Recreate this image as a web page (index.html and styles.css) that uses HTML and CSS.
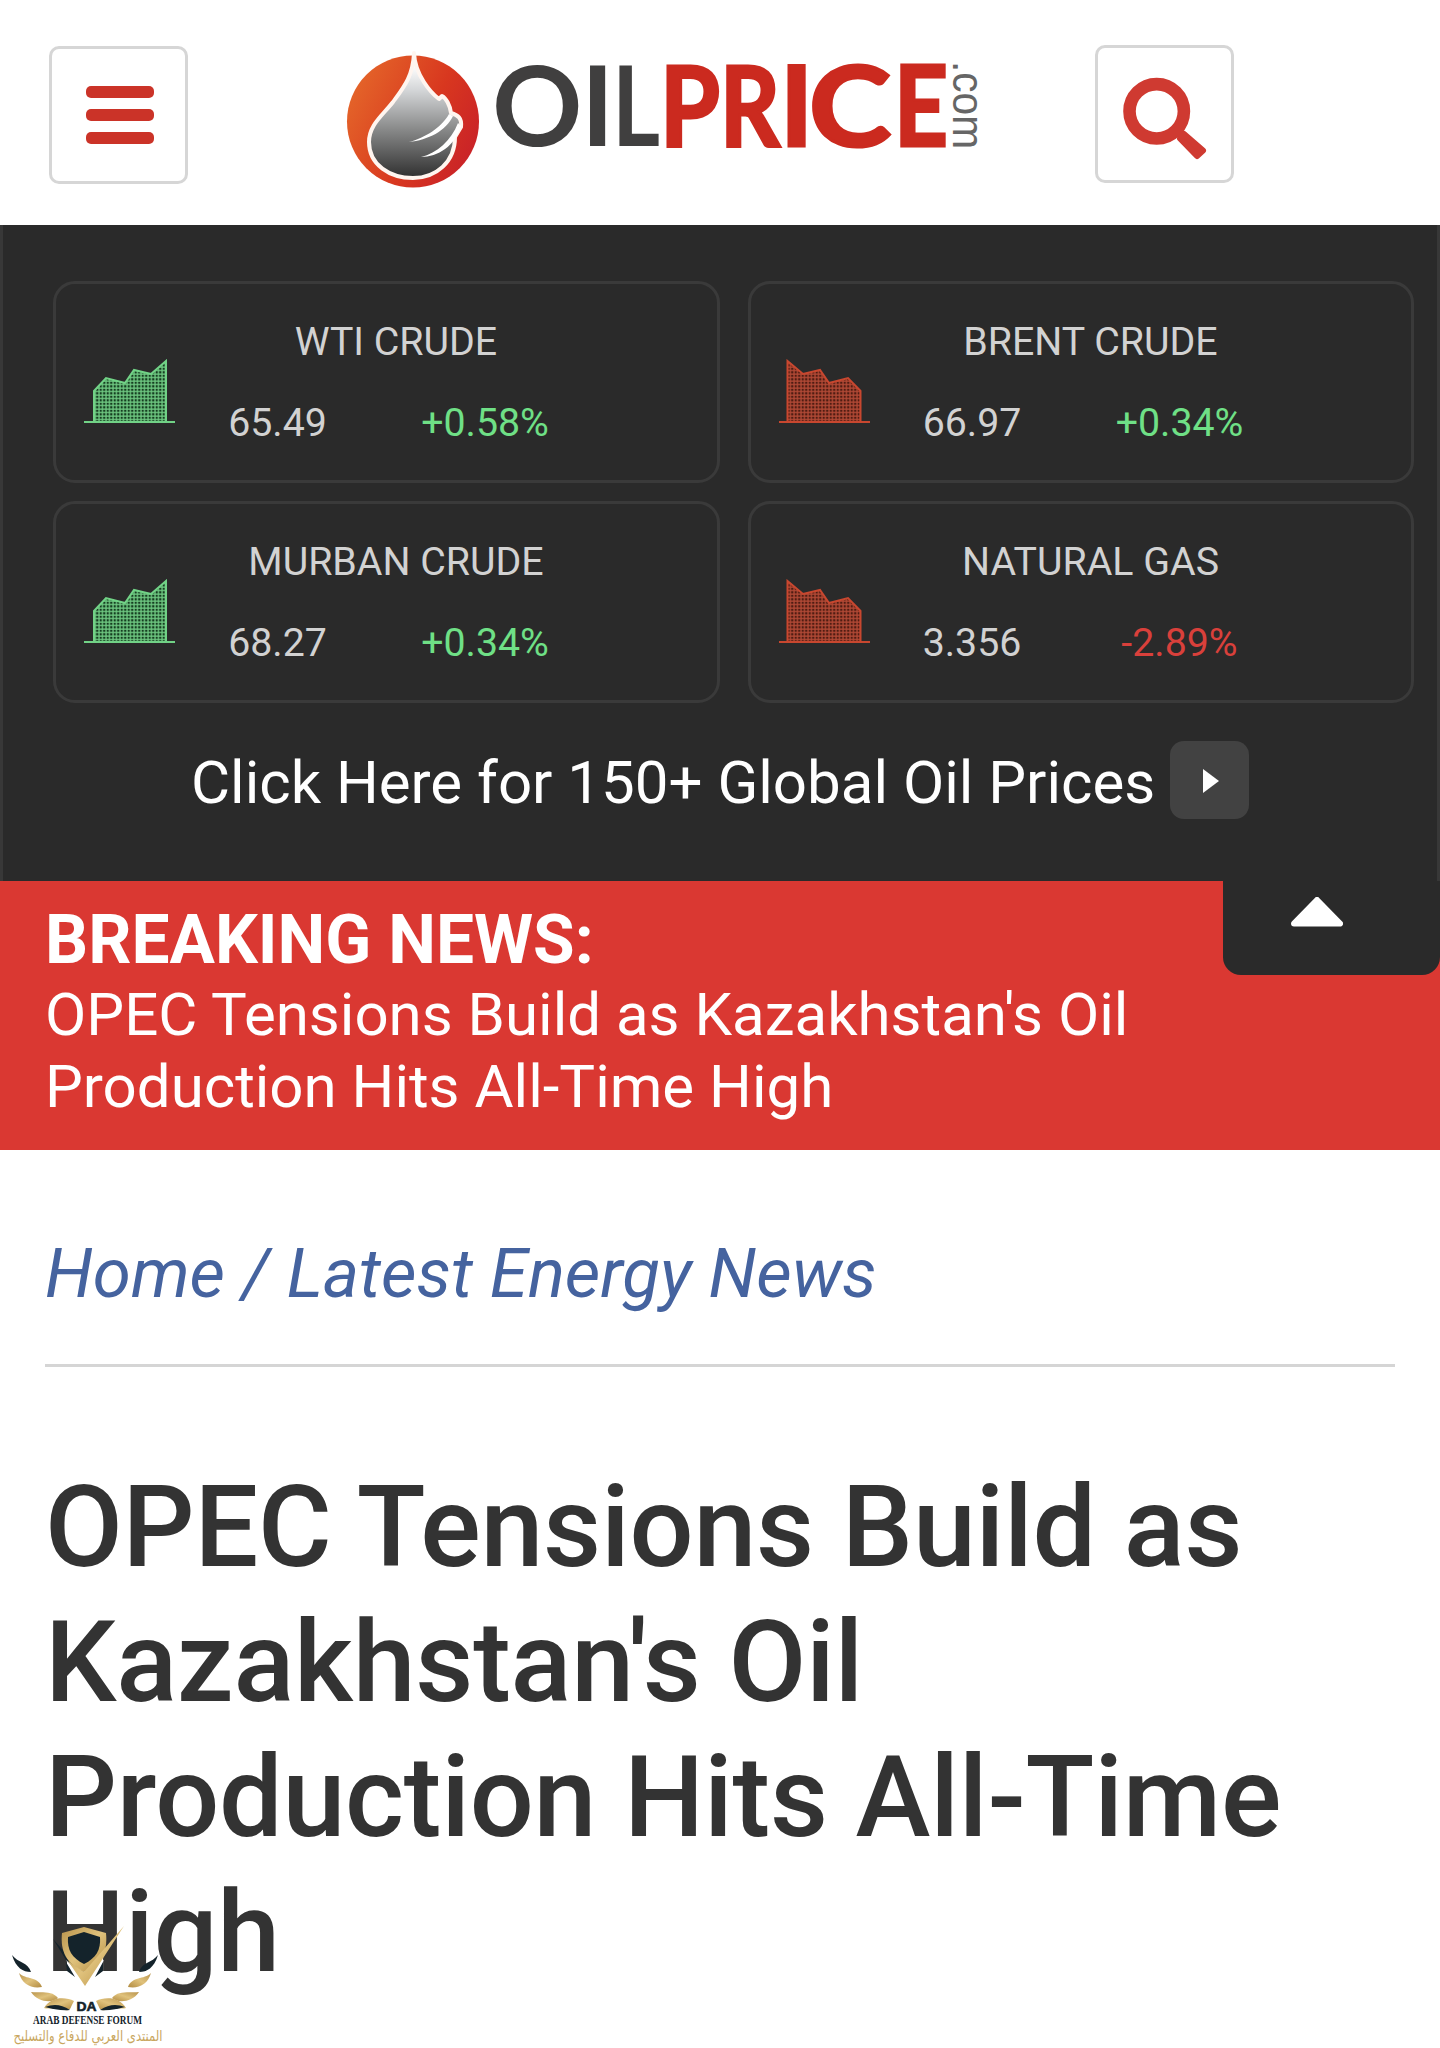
FILE: index.html
```html
<!DOCTYPE html>
<html lang="en">

<head>
    <meta charset="UTF-8">
    <meta name="viewport" content="width=device-width, initial-scale=1.0">
    <title>OPEC Tensions Build as Kazakhstan's Oil Production Hits All-Time High | OilPrice.com</title>
    <link rel="stylesheet" href="styles.css">
</head>

<body>

    <!-- chart icons shared by the price cards -->
    <svg class="sprite" aria-hidden="true">
        <defs>
            <pattern id="grid-up" width="3.5" height="3.5" patternUnits="userSpaceOnUse">
                <rect width="3.5" height="3.5" fill="#153d20" />
                <path d="M0 1H3.5M1 0V3.5" stroke="#6fc982" stroke-width="1.3" />
            </pattern>
            <pattern id="grid-down" width="3.5" height="3.5" patternUnits="userSpaceOnUse">
                <rect width="3.5" height="3.5" fill="#501c12" />
                <path d="M0 1H3.5M1 0V3.5" stroke="#b34a36" stroke-width="1.3" />
            </pattern>
        </defs>
        <symbol id="chart-up" viewBox="0 0 92 66">
            <path d="M10 63V32L22 19L41 24L50 11L67 15L82 2V63" fill="url(#grid-up)" stroke="#71d286" stroke-width="2" />
            <path d="M0 63H91" stroke="#71d286" stroke-width="2.2" />
        </symbol>
        <symbol id="chart-down" viewBox="0 0 92 66">
            <path d="M8.500 63V2L24 15L41 11L50 24L69 19L81.500 32V63" fill="url(#grid-down)" stroke="#c8472f" stroke-width="2" />
            <path d="M0 63H91" stroke="#c8472f" stroke-width="2.2" />
        </symbol>
    </svg>

    <header class="header">
        <button class="icon-btn menu-btn" aria-label="Menu">
            <span></span>
            <span></span>
            <span></span>
        </button>
        <a class="logo" href="#" aria-label="OilPrice.com">
            <svg width="640" height="140" viewBox="345 50 640 140">
                <defs>
                    <linearGradient id="ball" x1="0" y1="0.2" x2="1" y2="0.7">
                        <stop offset="0" stop-color="#e5682a" />
                        <stop offset="0.6" stop-color="#d8371f" />
                        <stop offset="1" stop-color="#c92228" />
                    </linearGradient>
                    <linearGradient id="drop" x1="0" y1="0" x2="0" y2="1">
                        <stop offset="0.1" stop-color="#ffffff" />
                        <stop offset="0.3" stop-color="#d3d5d7" />
                        <stop offset="0.6" stop-color="#8b8c8c" />
                        <stop offset="1" stop-color="#2f2f2f" />
                    </linearGradient>
                </defs>
                <circle cx="413" cy="121.500" r="66" fill="url(#ball)" />
                <path d="M414 54C413 77 404 88 393 103C382 117 369 126 369 143C369 166 390 179 413 179C436 179 455 163 455 138L461 128C462 119 458 116 451 114C450 106 446 99 442 97L439 100C431 94 415 76 414 54Z" transform="translate(0 -1)" fill="url(#drop)" stroke="#fff5ef" stroke-width="4" stroke-linejoin="round" />
                <path d="M409 142C425 138 442 127 449 114L453 116C446 131 428 140 409 142ZM421 157C437 153 451 141 458 123L461 126C455 146 438 157 421 157Z" fill="#fff" />
                <text class="logo-oil" y="146"><tspan x="492 581">OI</tspan><tspan x="612" textLength="48" lengthAdjust="spacingAndGlyphs">L</tspan></text>
                <text class="logo-price" y="146"><tspan x="660" textLength="60" lengthAdjust="spacingAndGlyphs">P</tspan><tspan x="720" textLength="60" lengthAdjust="spacingAndGlyphs">R</tspan><tspan x="780">I</tspan><tspan x="809" textLength="82" lengthAdjust="spacingAndGlyphs">C</tspan><tspan x="894" textLength="54" lengthAdjust="spacingAndGlyphs">E</tspan></text>
                <text class="logo-com" transform="translate(953 61) rotate(90)" textLength="88" lengthAdjust="spacingAndGlyphs">.com</text>
            </svg>
        </a>
        <button class="icon-btn search-btn" aria-label="Search">
            <svg width="92" height="96" viewBox="0 0 92 96">
                <circle cx="37.700" cy="45.300" r="27.200" fill="none" stroke="#cf3a31" stroke-width="12.600" />
                <path d="M65 68L61 72.500L78 90L84 84.500Z" fill="#cf3a31" stroke="#cf3a31" stroke-width="6" stroke-linejoin="round" />
            </svg>
        </button>
    </header>

    <section class="prices">
        <div class="price-grid">
            <div class="price-card">
                <svg class="chart"><use href="#chart-up" /></svg>
                <div class="price-name">WTI CRUDE</div>
                <div class="price-value">65.49</div>
                <div class="price-change up">+0.58%</div>
            </div>
            <div class="price-card">
                <svg class="chart"><use href="#chart-down" /></svg>
                <div class="price-name">BRENT CRUDE</div>
                <div class="price-value">66.97</div>
                <div class="price-change up">+0.34%</div>
            </div>
            <div class="price-card">
                <svg class="chart"><use href="#chart-up" /></svg>
                <div class="price-name">MURBAN CRUDE</div>
                <div class="price-value">68.27</div>
                <div class="price-change up">+0.34%</div>
            </div>
            <div class="price-card">
                <svg class="chart"><use href="#chart-down" /></svg>
                <div class="price-name">NATURAL GAS</div>
                <div class="price-value">3.356</div>
                <div class="price-change down">-2.89%</div>
            </div>
        </div>
        <a class="all-prices" href="#">
            <span>Click Here for 150+ Global Oil Prices</span>
            <i class="play"><svg width="16" height="24" viewBox="0 0 16 24"><path d="M0 0L16 12L0 24Z" fill="#fff" /></svg></i>
        </a>
    </section>

    <section class="breaking">
        <button class="toggle" aria-label="Hide prices">
            <svg width="52" height="30" viewBox="0 0 52 30"><path d="M26 3L49 26.500H3Z" fill="#fff" stroke="#fff" stroke-width="6" stroke-linejoin="round" /></svg>
        </button>
        <strong>BREAKING NEWS:</strong>
        <a href="#">OPEC Tensions Build as Kazakhstan's Oil<br>Production Hits All-Time High</a>
    </section>

    <main class="article">
        <nav class="breadcrumb"><a href="#">Home</a> / <a href="#">Latest Energy News</a></nav>
        <h1>OPEC Tensions Build as<br>Kazakhstan's Oil<br>Production Hits All-Time<br>High</h1>
    </main>

    <!-- forum badge -->
    <div class="badge">
        <svg width="170" height="138" viewBox="0 0 170 138">
            <defs>
                <linearGradient id="gold" x1="0" y1="0" x2="1" y2="1">
                    <stop offset="0" stop-color="#b8934c" />
                    <stop offset="0.5" stop-color="#e0c27c" />
                    <stop offset="1" stop-color="#b18a40" />
                </linearGradient>
                <g id="wing">
                    <path d="M12 45C18 53 28 52 31 62C23 62 16 58 12 45Z" fill="#14232b" />
                    <path d="M19 63C26 70 38 66 42 77C31 79 22 74 19 63Z" fill="url(#gold)" />
                    <path d="M31 82C40 83 52 80 58 88C53 93 38 93 31 82Z" fill="url(#gold)" />
                    <path d="M44 98C51 86 66 87 74 91C70 98 71 101 65 100C58 95 51 100 44 98Z" fill="url(#gold)" />
                    <path d="M45 97C53 94 61 94 70 100C62 101 53 99 45 97Z" fill="#14232b" />
                </g>
            </defs>
            <use href="#wing" />
            <use href="#wing" transform="translate(170 0) scale(-1 1)" />
            <path d="M66 50L76 67L85 77L95 67L104 50L85 60Z" fill="#fff" />
            <path d="M53 29L69 47L84 62L78 61L66 50ZM66 52L75 67L67 61ZM103 52L95 67L103 61Z" fill="#14232b" />
            <path d="M62 23L84 17L106 23C108 42 101 54 84 62C67 54 60 42 62 23Z" fill="url(#gold)" />
            <path d="M68 27L84 22L100 27C101 40 96 48 84 54C72 48 67 40 68 27Z" fill="#14232b" />
            <path d="M68 51L84 62L124 16L85 76Z" fill="url(#gold)" />
            <text class="badge-da" x="86.500" y="101" textLength="20" lengthAdjust="spacingAndGlyphs">DA</text>
            <text class="badge-name" x="33" y="114" textLength="109" lengthAdjust="spacingAndGlyphs">ARAB DEFENSE FORUM</text>
            <text class="badge-arabic" x="88" y="131" textLength="149" lengthAdjust="spacingAndGlyphs">المنتدى العربي للدفاع والتسليح</text>
        </svg>
    </div>

</body>

</html>
```
FILE: styles.css
```css
* {
    box-sizing: border-box;
}

body {
    margin: 0;
    height: 2048px;
    overflow: hidden;
    position: relative;
    font-family: Roboto, Arial, sans-serif;
    background-color: #fff;
    color: #333;
}

a {
    color: inherit;
    text-decoration: none;
}

button {
    padding: 0;
    border: none;
    cursor: pointer;
}

.sprite {
    display: block;
    width: 0;
    height: 0;
}

/* header */
.header {
    display: flex;
    align-items: flex-start;
    height: 225px;
    padding: 45px 0 0 49px;
}

.icon-btn {
    display: flex;
    align-items: center;
    justify-content: center;
    width: 139px;
    height: 138px;
    background-color: #fff;
    border: 3px solid #d6d6d6;
    border-radius: 10px;
}

.menu-btn {
    flex-direction: column;
    gap: 11px;
    margin-top: 1px;
    padding-left: 3px;
}

.menu-btn span {
    width: 68px;
    height: 12px;
    border-radius: 5px;
    background-color: #cb3328;
}

.logo {
    margin: 5px 110px 0 157px;
}

.logo svg {
    display: block;
}

.logo-oil,
.logo-price {
    font-family: Lato, sans-serif;
    font-size: 112px;
    font-weight: 700;
    fill: #403f3f;
}

.logo-price {
    fill: #cb2a1f;
    stroke: #cb2a1f;
    stroke-width: 3px;
}

.logo-com {
    font-family: "Liberation Sans", Arial, sans-serif;
    font-size: 44px;
    fill: #666;
}

/* prices */
.prices {
    height: 656px;
    padding: 56px 23px 0 50px;
    background-color: #2a2a2a;
    border: solid #383838;
    border-width: 0 3px;
}

.price-grid {
    display: grid;
    grid-template-columns: 1fr 1fr;
    gap: 18px 28px;
}

.price-card {
    display: grid;
    grid-template-columns: 118px 207px 208px 1fr;
    grid-template-rows: 81px 81px;
    align-items: center;
    height: 202px;
    padding-top: 17px;
    border: 3px solid #3a3a3a;
    border-radius: 22px;
    font-size: 39.3px;
    color: #d2d2d2;
    text-align: center;
}

.chart {
    grid-row: 1 / 3;
    width: 92px;
    height: 66px;
    margin: 19px 0 0 28px;
}

.price-name {
    grid-column: 2 / 4;
    padding-left: 29px;
}

.price-value {
    grid-row: 2;
    grid-column: 2;
}

.price-change {
    grid-row: 2;
    grid-column: 3;
}

.up {
    color: #6fe086;
}

.down {
    color: #d9403b;
}

.all-prices {
    display: flex;
    align-items: center;
    height: 79px;
    margin: 37px 0 0 138px;
    font-size: 60px;
    color: #fff;
    white-space: nowrap;
}

.all-prices span {
    padding-top: 5px;
}

.play {
    display: flex;
    align-items: center;
    justify-content: center;
    width: 79px;
    height: 78px;
    margin-left: 15px;
    padding: 2px 0 0 3px;
    border-radius: 14px;
    background-color: #424242;
}

/* breaking news */
.breaking {
    position: relative;
    height: 269px;
    padding: 23px 45px 0;
    background-color: #da3832;
    color: #fff;
    font-size: 60px;
    line-height: 72px;
}

.breaking strong {
    display: block;
    margin-bottom: 3px;
    font-size: 67.6px;
}

.toggle {
    position: absolute;
    top: 0;
    right: 0;
    display: flex;
    justify-content: center;
    width: 217px;
    height: 94px;
    padding: 16px 29px 0 0;
    background-color: #2a2a2a;
    border-radius: 0 0 18px 18px;
}

/* article */
.article {
    padding: 84px 45px 0;
}

.breadcrumb {
    height: 133px;
    border-bottom: 3px solid #d5d5d5;
    font-size: 69px;
    line-height: 80px;
    font-style: italic;
    color: #45639f;
}

.article h1 {
    margin: 93px 0 0;
    font-size: 113px;
    line-height: 135px;
    font-weight: 500;
    letter-spacing: -0.25px;
    white-space: nowrap;
}

.badge {
    position: absolute;
    left: 0;
    top: 1910px;
}

.badge svg {
    display: block;
}

.badge-da {
    font-family: "Liberation Sans", Arial, sans-serif;
    font-size: 13px;
    font-weight: 700;
    text-anchor: middle;
    fill: #14232b;
    stroke: #14232b;
    stroke-width: 0.6px;
}

.badge-name {
    font-family: "Liberation Serif", serif;
    font-size: 13.5px;
    font-weight: 700;
    fill: #14232b;
}

.badge-arabic {
    font-family: "DejaVu Sans", sans-serif;
    font-size: 15px;
    text-anchor: middle;
    fill: #c9a75f;
}
```
